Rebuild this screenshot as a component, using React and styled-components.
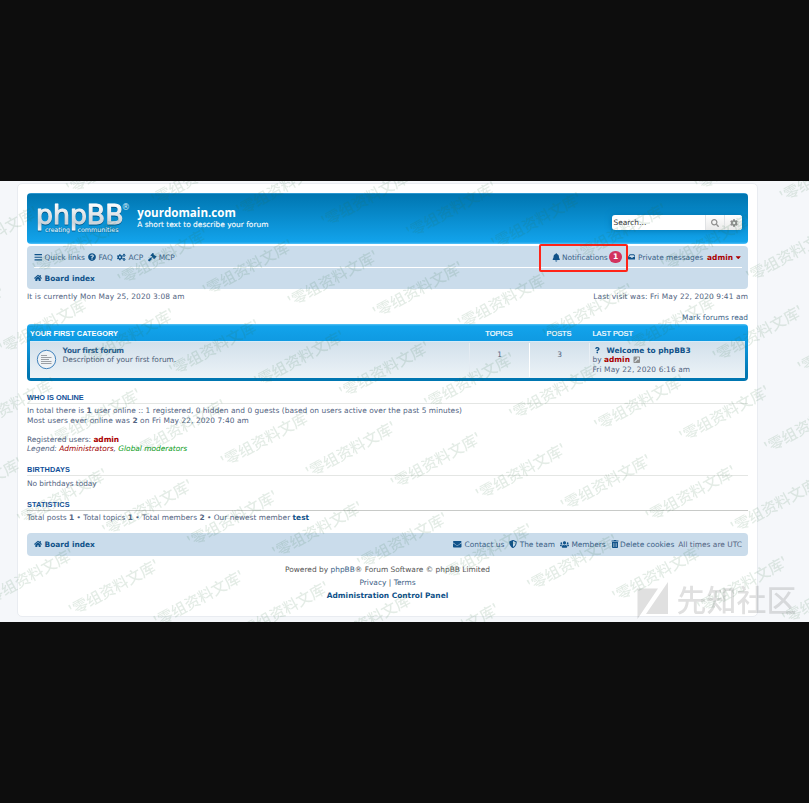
import React from 'react';
import styled, { createGlobalStyle, css } from 'styled-components';
import {
  FaBars, FaQuestionCircle, FaCogs, FaGavel, FaHome, FaBell, FaInbox, FaCaretDown, FaSearch, FaCog,
  FaEnvelope, FaShieldAlt, FaUsers, FaTrashAlt, FaExternalLinkSquareAlt, FaQuestion,
} from 'react-icons/fa';

const GlobalStyle = createGlobalStyle`
  * { box-sizing: border-box; }
  body { margin: 0; background: #0d0d0d; }
`;

const Stage = styled.div`
  width: 809px;
  height: 803px;
  padding: 181px 0;
  background: #0d0d0d;
  overflow: hidden;
`;

const Page = styled.div`
  position: relative;
  height: 441px;
  padding: 2px 51px 4px 17px;
  overflow: hidden;
  background: #f5f7fa;
  font: 7.45px/9.5px "DejaVu Sans", Verdana, sans-serif;
  color: #536482;
  white-space: nowrap;
`;

const Wrap = styled.main`
  display: flex;
  flex-direction: column;
  height: 434px;
  padding: 9px 9px 0;
  background: #fff;
  border: 1px solid #e9ecf1;
  border-radius: 5px;
`;

const Text = styled.span`
  letter-spacing: ${(p) => p.$ls || 0}px;
  ${(p) => p.$bold && css`font-weight: 700;`}
  ${(p) => p.$color && css`color: ${p.$color};`}
`;

const Admin = styled.b`
  color: #a00;
`;

const Strong = styled.b`
  color: #105289;
`;

const HeaderBar = styled.header`
  display: flex;
  align-items: flex-start;
  height: 50.5px;
  padding: 8px 6px 0 8px;
  border-radius: 4px;
  background: linear-gradient(to bottom, #42a6dd 0, #0076b1 1.5px, #12a3eb 49px, #48bbf5 50.5px);
`;

const Logo = styled.svg`
  width: 98px;
  height: 38px;
`;

const SiteInfo = styled.div`
  flex: 1;
  padding: 5px 0 0 4.3px;
  color: #fff;
`;

const SiteName = styled.h1`
  margin: 0;
  font: 700 11.6px/14px "Open Sans", "Trebuchet MS", sans-serif;
`;

const SiteTagline = styled.p`
  margin: 0;
  line-height: 9px;
  -webkit-text-stroke: 0.1px #fff;
`;

const SearchBox = styled.div`
  display: flex;
  width: 130px;
  height: 15px;
  margin-top: 14px;
  border-radius: 3px;
  overflow: hidden;
  background: #fff;
  box-shadow: 0 0 6px #0075b0;
`;

const SearchInput = styled.div`
  flex: 1;
  padding-left: 1.5px;
  line-height: 16px;
  color: #333;
`;

const SearchButton = styled.div`
  display: flex;
  align-items: center;
  justify-content: center;
  width: ${(p) => p.$width}px;
  border-left: 1px solid #e0e2e4;
  background: linear-gradient(#fff, #e9e9e9);
  color: #8f8f8f;
  font-size: 8px;
`;

const NavBar = styled.nav`
  height: 43px;
  margin-top: 2.5px;
  padding: 0 6px 0 7px;
  border-radius: 4px;
  background: #cadceb;
`;

const NavRow = styled.div`
  display: flex;
  align-items: center;
  height: 21px;
  padding-top: 0.6px;
  ${(p) => p.$divided && css`
    border-bottom: 1px solid #fff;
    height: 21.5px;
    padding-top: 2px;
  `}
`;

const NavItem = styled.div`
  position: relative;
  display: flex;
  align-items: center;
  color: ${(p) => p.$color || '#105289'};
  margin-right: ${(p) => p.$gap || 0}px;
  letter-spacing: ${(p) => p.$ls || 0}px;
  font-weight: ${(p) => (p.$bold ? 700 : 400)};
`;

const Ico = styled.span`
  display: flex;
  justify-content: ${(p) => p.$justify || 'flex-start'};
  width: ${(p) => p.$w || 10.5}px;
  margin-right: ${(p) => p.$mr || 0}px;
  font-size: ${(p) => p.$size || 8.5}px;
  color: ${(p) => p.$color || '#105289'};

  svg {
    flex: none;
  }
`;

const Label = styled.span`
  color: #3c6287;
`;

const Spacer = styled.div`
  flex: 1;
`;

const Badge = styled.span`
  width: 13px;
  height: 12px;
  margin-left: 1.5px;
  border-radius: 6px;
  background: #d2335f;
  color: #fff;
  font-size: 7.5px;
  font-weight: 700;
  line-height: 12px;
  text-align: center;
`;

const Highlight = styled.span`
  position: absolute;
  left: -12.3px;
  top: -7.5px;
  width: 89px;
  height: 28px;
  border: 2px solid #ff2418;
  border-radius: 2px;
`;

const Line = styled.div`
  display: flex;
  justify-content: ${(p) => p.$justify || 'space-between'};
  height: 9.5px;
  margin-top: ${(p) => p.$top || 0}px;
`;

const Category = styled.section`
  height: 57px;
  margin-top: 2px;
  padding: 0 3px;
  border-radius: 4px;
  background: linear-gradient(to bottom, #5cc3f4 0, #12a3eb 2px, #0f9ae2 17px, #0076b1 50px);
`;

const CategoryHead = styled.div`
  display: grid;
  grid-template-columns: 439px 60px 60px 1fr;
  height: 17.5px;
  font: 7.4px/19.6px "Liberation Sans", Arial, sans-serif;
  color: #fff;
  border-bottom: 1px solid #d6ebf8;
`;

const HeadCell = styled.div`
  text-align: ${(p) => (p.$center ? 'center' : 'left')};
  padding-left: ${(p) => p.$pad || 0}px;
  font-weight: ${(p) => (p.$bold ? 700 : 400)};
  -webkit-text-stroke: ${(p) => (p.$bold ? 0 : 0.2)}px #fff;
`;

const ForumRow = styled.div`
  display: grid;
  grid-template-columns: 439px 60px 60px 1fr;
  height: 36px;
  padding: 1px 0;
  background: linear-gradient(to bottom, #d2e0eb 0, #ecf3f7 100%);
`;

const ForumCell = styled.div`
  display: flex;
  padding: 3px 0 0 6px;
`;

const ForumText = styled.div`
  padding-left: 5.6px;
`;

const CountCell = styled.div`
  border-left: 1px solid ${(p) => p.$line};
  text-align: center;
  line-height: 23px;
`;

const LastPost = styled.div`
  padding: 3px 0 0 2.5px;
  border-left: 1px solid #e8eff5;
`;

const PostLine = styled.div`
  display: flex;
  align-items: center;
  height: 9.5px;
`;

const SectionTitle = styled.h3`
  height: 11px;
  margin: ${(p) => p.$top}px 0 2.5px;
  border-bottom: 1px solid ${(p) => p.$rule};
  font: 700 7.35px/9.4px "Liberation Sans", Arial, sans-serif;
  letter-spacing: ${(p) => p.$ls || 0}px;
  color: #115098;
`;

const OnlineList = styled.div`
  display: flex;
  flex-direction: column;
`;

const Blank = styled.div`
  height: 9.5px;
`;

const Em = styled.i`
  color: ${(p) => p.$color};
`;

const FooterBar = styled(NavBar)`
  display: flex;
  align-items: center;
  height: 23px;
  margin-top: 10.3px;
`;

const Copyright = styled.footer`
  padding-top: 6.8px;
  text-align: center;
  line-height: 13.2px;
  color: #555;
`;

const Overlay = styled.svg`
  position: absolute;
  inset: 0;
  pointer-events: none;
`;

const Lettering = styled.text`
  filter: drop-shadow(0 1px 0.6px rgba(0, 60, 100, 0.6));
`;

/* Board logo: rounded silver lettering with a small slogan under it */
function BoardLogo() {
  return (
    <Logo viewBox="0 0 98 38">
      <defs>
        <linearGradient id="silver" x1="0" y1="0" x2="0" y2="1">
          <stop offset="0.1" stopColor="#fff" />
          <stop offset="0.75" stopColor="#ccd4da" />
          <stop offset="1" stopColor="#f2f5f7" />
        </linearGradient>
      </defs>
      <g fontFamily="DejaVu Sans, sans-serif" strokeLinejoin="round">
        <Lettering x="1" y="23.2" fontSize="26" textLength="87.500" lengthAdjust="spacingAndGlyphs" fill="url(#silver)" stroke="url(#silver)" strokeWidth="1.1">phpBB</Lettering>
        <text x="86.500" y="8.800" fontSize="8.500" fill="#d8ebf5">®</text>
        <g fontSize="6.4" fill="#f4fafd" stroke="#0a85c4" strokeWidth="1.4" paintOrder="stroke">
          <text x="10" y="31.2" textLength="25" lengthAdjust="spacingAndGlyphs">creating</text>
          <text x="42.5" y="31.2" textLength="41" lengthAdjust="spacingAndGlyphs">communities</text>
        </g>
      </g>
    </Logo>
  );
}

const ForumIconSvg = styled.svg`
  width: 21px;
  height: 21px;
  margin-top: 3px;
`;

function ForumIcon() {
  return (
    <ForumIconSvg viewBox="0 0 21 21">
      <circle cx="10.5" cy="10.5" r="9.2" fill="#eef2f5" stroke="#4384bd" strokeWidth="1" />
      <path d="M5 6.500h6M5 8.500h10.500M5 10.500h8M5 12.500h10.500M5 14.500h10.500" stroke="#9b9fa4" strokeWidth="1.1" />
    </ForumIconSvg>
  );
}

/* The marks repeat on a slanted lattice */
const marks = [];
for (let r = -4; r <= 4; r += 1) {
  for (let c = -11; c <= 7; c += 1) {
    const x = 598 + c * 85 - r * 33.5;
    const y = 250.4 + c * 11 + r * 80;
    if (x > -90 && x < 809 && y > 0 && y < 485) marks.push([x, y]);
  }
}

function Watermarks() {
  return (
    <Overlay width="809" height="441" viewBox="0 0 809 441">
      <g fontFamily="Noto Sans CJK SC, sans-serif" fontSize="15.2" fontWeight="500" fill="#2f7040" opacity="0.13">
        {marks.map(([x, y]) => (
          <text key={`${x},${y}`} transform={`translate(${x} ${y}) rotate(-28.5)`}>'零组资料文库'</text>
        ))}
      </g>
      <g fill="#000" opacity="0.12">
        <path d="M637.500 407.500h20.500l-20.500 30.500zM668 401v32h-22z" />
        <text x="676.5" y="430" fontFamily="Noto Sans CJK SC, sans-serif" fontSize="30" fontWeight="500">先知社区</text>
      </g>
    </Overlay>
  );
}

export default function App() {
  return (
    <Stage>
      <GlobalStyle />
      <Page>
        <Wrap>
          <HeaderBar>
            <BoardLogo />
            <SiteInfo>
              <SiteName>yourdomain.com</SiteName>
              <SiteTagline>A short text to describe your forum</SiteTagline>
            </SiteInfo>
            <SearchBox>
              <SearchInput>Search…</SearchInput>
              <SearchButton $width={19}><FaSearch /></SearchButton>
              <SearchButton $width={18}><FaCog /></SearchButton>
            </SearchBox>
          </HeaderBar>

          <NavBar>
            <NavRow $divided>
              <NavItem $gap={3}><Ico><FaBars /></Ico><Label>Quick links</Label></NavItem>
              <NavItem $gap={4.4}><Ico $size={8}><FaQuestionCircle /></Ico><Label>FAQ</Label></NavItem>
              <NavItem $gap={5}><Ico $w={11.3} $size={8.6}><FaCogs /></Ico><Label>ACP</Label></NavItem>
              <NavItem><Ico><FaGavel /></Ico><Label>MCP</Label></NavItem>
              <Spacer />
              <NavItem $gap={5.5} $ls={-0.08}>
                <Highlight />
                <Ico><FaBell /></Ico><Label>Notifications</Label><Badge>1</Badge>
              </NavItem>
              <NavItem $gap={4} $ls={-0.04}><Ico $size={7.8}><FaInbox /></Ico><Label>Private messages</Label></NavItem>
              <NavItem $bold $color="#a00">admin<Ico $w={9} $justify="flex-end" $color="#a00"><FaCaretDown /></Ico></NavItem>
            </NavRow>
            <NavRow>
              <NavItem $bold><Ico $size={8}><FaHome /></Ico>Board index</NavItem>
            </NavRow>
          </NavBar>

          <Line $top={3}>
            <Text $ls={0.1}>It is currently Mon May 25, 2020 3:08 am</Text>
            <Text $ls={0.11}>Last visit was: Fri May 22, 2020 9:41 am</Text>
          </Line>
          <Line $top={11} $justify="flex-end">
            <Text $color="#3c6287">Mark forums read</Text>
          </Line>

          <Category>
            <CategoryHead>
              <HeadCell $bold>YOUR FIRST CATEGORY</HeadCell>
              <HeadCell $center>TOPICS</HeadCell>
              <HeadCell $center>POSTS</HeadCell>
              <HeadCell $pad={3.5}>LAST POST</HeadCell>
            </CategoryHead>
            <ForumRow>
              <ForumCell>
                <ForumIcon />
                <ForumText>
                  <Text $bold $ls={-0.33} $color="#2d5f8f">Your first forum</Text><br />
                  <Text $ls={-0.04} $color="#4c5d77">Description of your first forum.</Text>
                </ForumText>
              </ForumCell>
              <CountCell $line="#e3ebf2">1</CountCell>
              <CountCell $line="#fff">3</CountCell>
              <LastPost>
                <PostLine><Ico $w={10} $mr={4} $size={6.5} $justify="center"><FaQuestion /></Ico><Strong>Welcome to phpBB3</Strong></PostLine>
                <PostLine>by&nbsp;<Admin>admin</Admin><Ico $w={13} $size={7.5} $justify="center" $color="#8f8f8f"><FaExternalLinkSquareAlt /></Ico></PostLine>
                <PostLine><Text $ls={0.1}>Fri May 22, 2020 6:16 am</Text></PostLine>
              </LastPost>
            </ForumRow>
          </Category>

          <SectionTitle $top={11.8} $rule="#e4e6e4">WHO IS ONLINE</SectionTitle>
          <OnlineList>
            <Text $ls={0.03}>In total there is <b>1</b> user online :: 1 registered, 0 hidden and 0 guests (based on users active over the past 5 minutes)</Text>
            <Text $ls={0.07}>Most users ever online was <b>2</b> on Fri May 22, 2020 7:40 am</Text>
            <Blank />
            <Text $ls={-0.04}>Registered users: <Admin>admin</Admin></Text>
            <Text $ls={-0.02}><i>Legend: <Em $color="#a00000">Administrators</Em>, <Em $color="#0a9c1a">Global moderators</Em></i></Text>
          </OnlineList>

          <SectionTitle $top={11.3} $rule="#e4e6e4" $ls={0.1}>BIRTHDAYS</SectionTitle>
          <Text $ls={-0.08}>No birthdays today</Text>

          <SectionTitle $top={11.5} $rule="#c8cac8" $ls={0.1}>STATISTICS</SectionTitle>
          <Text>
            Total posts <b>1</b> • Total topics <b>1</b> • Total members <b>2</b> • Our newest member <Strong>test</Strong>
          </Text>

          <FooterBar>
            <NavItem $bold><Ico $size={8}><FaHome /></Ico>Board index</NavItem>
            <Spacer />
            <NavItem $gap={5}><Ico $w={11}><FaEnvelope /></Ico><Label>Contact us</Label></NavItem>
            <NavItem $gap={5} $ls={-0.03}><Ico $size={8} $w={10.3}><FaShieldAlt /></Ico><Label>The team</Label></NavItem>
            <NavItem $gap={5} $ls={-0.05}><Ico $w={11.5} $size={9}><FaUsers /></Ico><Label>Members</Label></NavItem>
            <NavItem $gap={4} $ls={-0.05}><Ico $w={9.6} $size={8}><FaTrashAlt /></Ico><Label>Delete cookies</Label></NavItem>
            <NavItem $color="#536482">All times are UTC</NavItem>
          </FooterBar>

          <Copyright>
            Powered by <Label>phpBB</Label>® Forum Software © phpBB Limited<br />
            <Label>Privacy</Label> | <Label>Terms</Label><br />
            <Strong>Administration Control Panel</Strong>
          </Copyright>
        </Wrap>
        <Watermarks />
      </Page>
    </Stage>
  );
}
